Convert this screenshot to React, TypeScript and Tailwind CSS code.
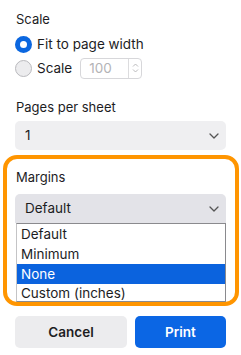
import React from "react";

function Chevron() {
  return (
    <svg width="10" height="6" viewBox="0 0 10 6" fill="none">
      <path d="M1 1l4 4 4-4" stroke="#555" strokeWidth="1.3" strokeLinecap="round" strokeLinejoin="round" />
    </svg>
  );
}

export default function App() {
  return (
    <div
      className="relative w-[241px] h-[355px] bg-white overflow-hidden text-[13px] text-[#1d1d1f]"
      style={{ fontFamily: "Inter, 'Noto Sans', sans-serif" }}
    >
      <div className="flex flex-col px-[15px] pt-[11px]">
        <div className="h-[16px] leading-[16px] pl-[1px]">Scale</div>
        <div className="mt-[8px] flex items-center h-[18px]">
          <div className="w-[17px] h-[17px] rounded-full bg-[#0b67e0] flex items-center justify-center">
            <div className="w-[7px] h-[7px] rounded-full bg-white" />
          </div>
          <span className="ml-[5px] text-[13.5px]">Fit to page width</span>
        </div>
        <div className="mt-[4px] flex items-center h-[22px]">
          <div className="w-[17px] h-[17px] rounded-full bg-[#ececee] border border-[#b9b9bd]" />
          <span className="ml-[5px] text-[13.5px]">Scale</span>
          <div className="ml-[8px] w-[62px] h-[21px] rounded-[4px] border border-[#d7d7da] flex items-center">
            <span className="ml-[8px] text-[13.5px] text-[#b3b3b6] flex-1">100</span>
            <div className="w-[13px] h-full border-l border-[#dcdcde] flex flex-col items-center justify-center gap-[2px]">
              <svg width="7" height="4" viewBox="0 0 7 4"><path d="M1 3.5l2.5-2.5 2.5 2.5" stroke="#b3b3b6" fill="none" strokeWidth="0.9" /></svg>
              <svg width="7" height="4" viewBox="0 0 7 4"><path d="M1 0.5l2.5 2.5 2.5-2.5" stroke="#b3b3b6" fill="none" strokeWidth="0.9" /></svg>
            </div>
          </div>
        </div>
        <div className="mt-[20px] h-[16px] leading-[16px] pl-[1px]">Pages per sheet</div>
        <div className="mt-[6px] h-[29px] rounded-[5px] bg-[#efeff1] flex items-center justify-between pl-[10px] pr-[7px]">
          <span className="text-[13.5px]">1</span>
          <Chevron />
        </div>
        <div className="mt-[19px] h-[16px] leading-[16px] pl-[1px]">Margins</div>
        <div className="mt-[9px] h-[29px] rounded-t-[5px] bg-[#e3e3e8] flex items-center justify-between pl-[10px] pr-[7px]">
          <span className="text-[13.5px]">Default</span>
          <Chevron />
        </div>
        <div className="ml-[1px] h-[79px] border border-[#8a8a8e] border-l-[#c4c4c6] bg-white flex flex-col overflow-hidden text-[13.5px]">
          <div className="h-[20px] leading-[20px] pl-[4px]">Default</div>
          <div className="h-[20px] leading-[20px] pl-[4px]">Minimum</div>
          <div className="h-[20px] leading-[20px] pl-[4px] bg-[#0b63de] text-white">None</div>
          <div className="h-[19px] leading-[19px] pl-[4px]">Custom (inches)</div>
        </div>
        <div className="mt-[14px] flex gap-[8px]">
          <button className="w-[112px] h-[32px] rounded-[5px] bg-[#ececee] font-semibold text-[13.5px] text-[#1d1d1f]">Cancel</button>
          <button className="flex-1 h-[32px] rounded-[5px] bg-[#0b66e4] font-semibold text-[13.5px] text-white">Print</button>
        </div>
      </div>
      <div className="absolute left-[3px] top-[155px] w-[236px] h-[151px] rounded-[14px] border-[4px] border-[#ff9500] pointer-events-none" />
    </div>
  );
}
